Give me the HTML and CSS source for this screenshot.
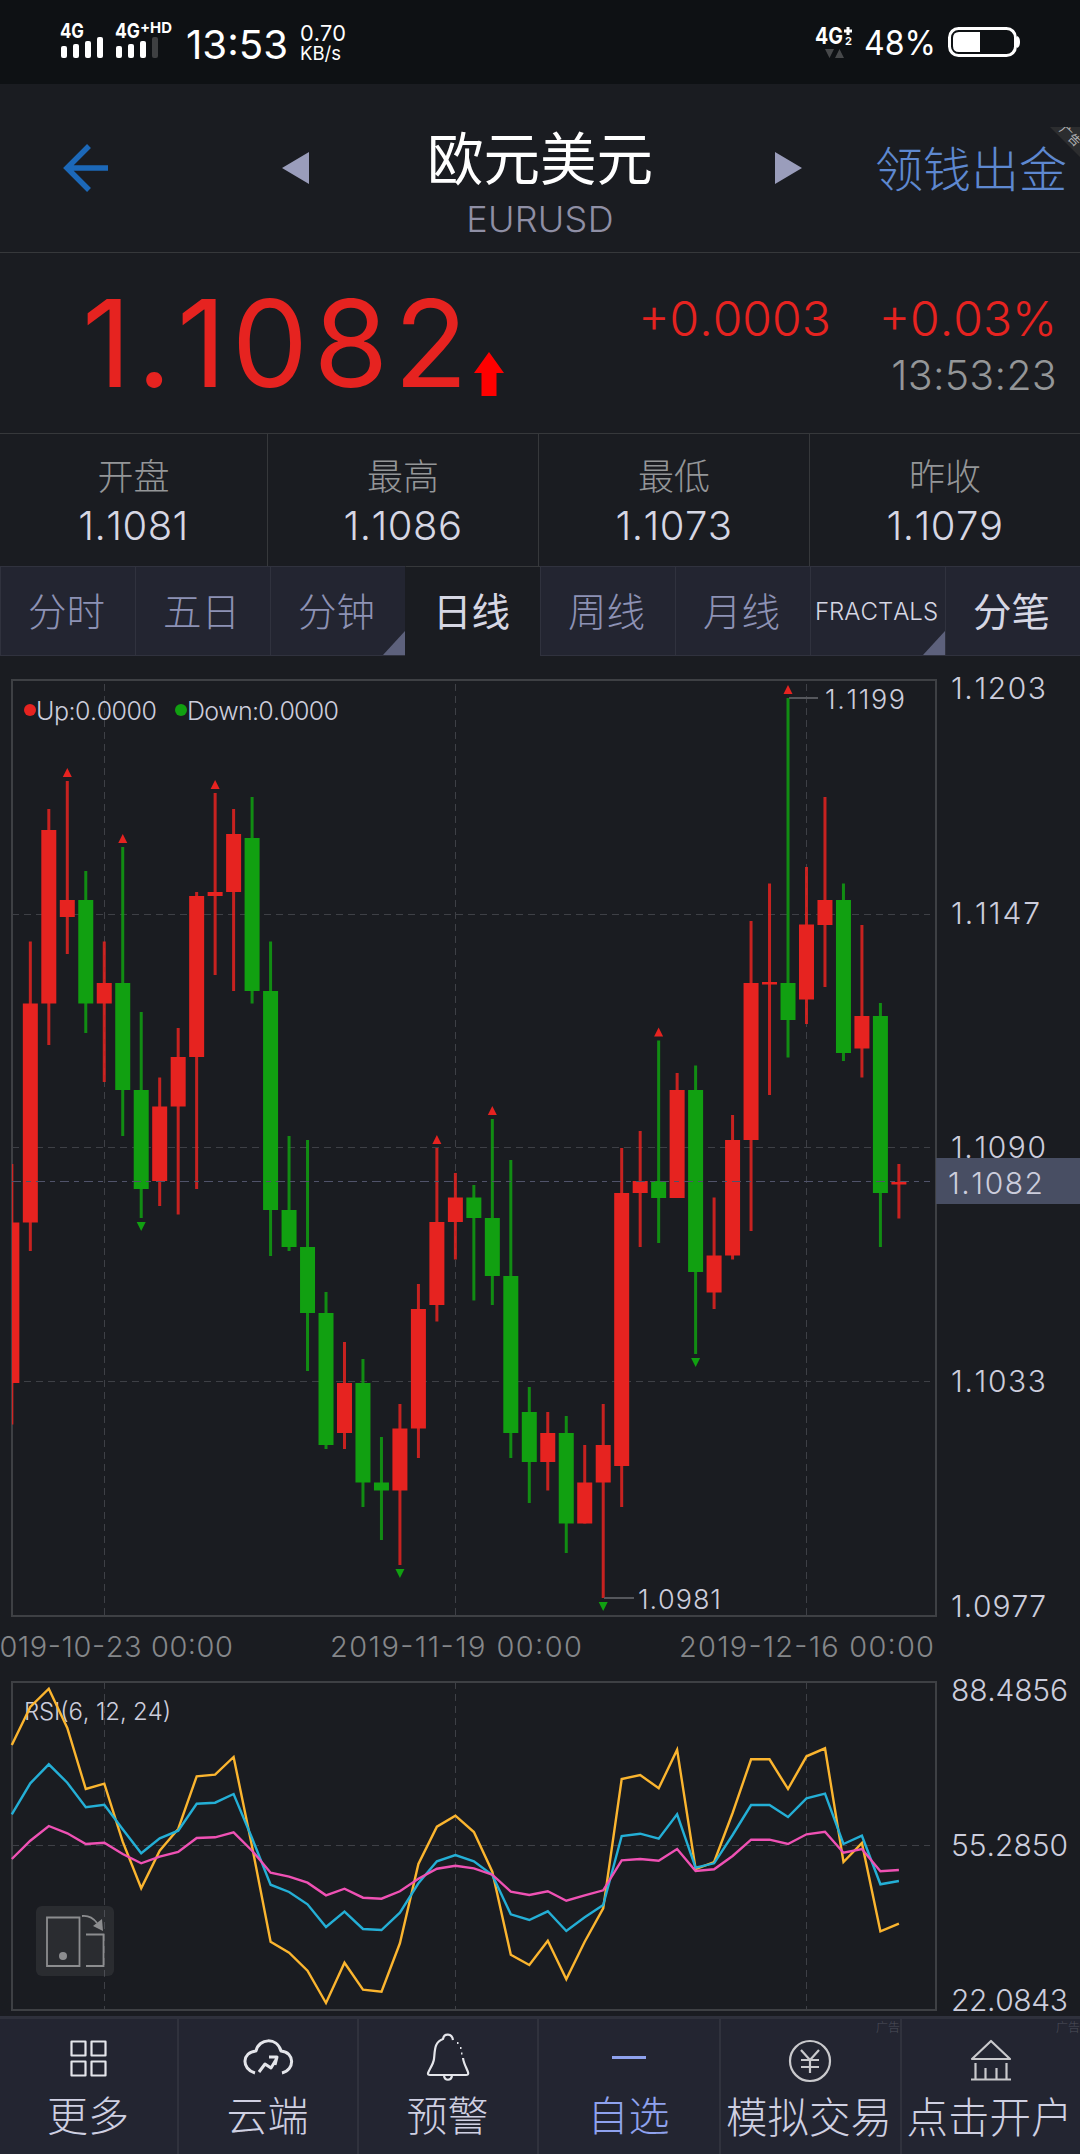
FILE: index.html
```html
<!DOCTYPE html>
<html lang="zh-CN">
  <head>
    <meta charset="UTF-8" />
    <meta name="viewport" content="width=device-width, initial-scale=1.0" />
    <title>欧元美元 EURUSD</title>
    <link rel="stylesheet" href="styles.css">
  </head>
  <body>
    <!-- 状态栏 -->
    <div class="status-bar">
      <svg width="360" height="84" viewBox="0 0 360 84" fill="#fff">
        <text class="net" x="60" y="38" font-size="20" textLength="24" lengthAdjust="spacingAndGlyphs">4G</text>
        <rect x="61" y="46" width="6" height="12" rx="2" />
        <rect x="73" y="44" width="6" height="14" rx="2" />
        <rect x="85" y="41" width="6" height="17" rx="2" />
        <rect x="97" y="37" width="6" height="21" rx="2" />
        <text class="net" x="115" y="38" font-size="20" textLength="25" lengthAdjust="spacingAndGlyphs">4G</text>
        <text class="net" x="140" y="33" font-size="15" textLength="32" lengthAdjust="spacingAndGlyphs">+HD</text>
        <rect x="116" y="46" width="6" height="12" rx="2" />
        <rect x="128" y="44" width="6" height="14" rx="2" />
        <rect x="140" y="41" width="6" height="17" rx="2" />
        <rect x="152" y="37" width="6" height="21" rx="2" fill="#3e4042" />
        <text x="186" y="59" font-size="39" textLength="102" lengthAdjust="spacingAndGlyphs">13:53</text>
        <text x="300" y="41" font-size="22" textLength="46" lengthAdjust="spacingAndGlyphs">0.70</text>
        <text x="300" y="60" font-size="19" textLength="41" lengthAdjust="spacingAndGlyphs">KB/s</text>
      </svg>
      <svg width="280" height="84" viewBox="800 0 280 84" fill="#fff">
        <text class="net" x="815" y="44" font-size="23" textLength="28" lengthAdjust="spacingAndGlyphs">4G</text>
        <path d="M844 31H852M848 27V35" stroke="#fff" stroke-width="3" />
        <text class="net" x="845" y="45" font-size="11">2</text>
        <path d="M825 49H834L829.500 58ZM835 58H844L839.500 49Z" fill="#46484a" />
        <text x="864" y="55" font-size="34" textLength="72" lengthAdjust="spacingAndGlyphs">48%</text>
        <rect x="949.500" y="28.500" width="66" height="27" rx="9" fill="none" stroke="#fff" stroke-width="3" />
        <path d="M980 32V52H959Q953 52 953 46V38Q953 32 959 32Z" />
        <path d="M1017 36Q1020 37 1020 42T1017 48Z" />
      </svg>
    </div>

    <!-- 标题栏 -->
    <header class="header">
      <svg class="back" width="46" height="50" viewBox="0 0 46 50">
        <path d="M26 3L4 25L26 47M3 25H45" fill="none" stroke="#1c68b8" stroke-width="5.500" />
      </svg>
      <svg class="arrow" width="28" height="32" viewBox="0 0 28 32"><path d="M0 16L27 0V32Z" /></svg>
      <div class="title">
        <h1>欧元美元</h1>
        <p>EURUSD</p>
      </div>
      <svg class="arrow next" width="28" height="32" viewBox="0 0 28 32"><path d="M28 16L1 0V32Z" /></svg>
      <a class="promo">领钱出金</a>
      <div class="corner"><span>广告</span></div>
    </header>

    <!-- 最新报价 -->
    <section class="quote">
      <div class="price">1.1082</div>
      <svg class="price-up" width="30" height="44" viewBox="0 0 30 44">
        <path d="M15 0L30 21H22.500V44H7.500V21H0Z" fill="#f00" />
      </svg>
      <div class="change">
        <div class="change-row"><span class="diff">+0.0003</span><span class="pct">+0.03%</span></div>
        <div class="time">13:53:23</div>
      </div>
    </section>

    <section class="stats">
      <div class="stat"><span>开盘</span><b>1.1081</b></div>
      <div class="stat"><span>最高</span><b>1.1086</b></div>
      <div class="stat"><span>最低</span><b>1.1073</b></div>
      <div class="stat"><span>昨收</span><b>1.1079</b></div>
    </section>

    <nav class="tabs">
      <a class="tab">分时</a>
      <a class="tab">五日</a>
      <a class="tab more">分钟</a>
      <a class="tab active">日线</a>
      <a class="tab">周线</a>
      <a class="tab">月线</a>
      <a class="tab more indicator">FRACTALS</a>
      <a class="tab light">分笔</a>
    </nav>

    <!-- K线图 -->
    <svg class="chart" width="1080" height="1012" viewBox="0 656 1080 1012">
      <defs>
        <clipPath id="plot"><rect x="12" y="680" width="924" height="936" /></clipPath>
      </defs>
      <g class="grid">
        <path d="M12 914.500H930M12 1147.500H930M12 1381.500H930" />
        <path d="M104.500 684V1616M455.500 684V1616M806.500 684V1616" />
      </g>
      <rect class="frame" x="12" y="680" width="924" height="936" />
      <g id="candles" clip-path="url(#plot)"></g>
      <path class="last-line" d="M12 1181.500H930" />
      <path class="leader" d="M789 698H818M604 1598H634" />
      <circle cx="30" cy="710" r="6" fill="#e62320" />
      <circle cx="181" cy="710" r="6" fill="#11a011" />
      <g class="label" font-size="25">
        <text x="36" y="720" textLength="121">Up:0.0000</text>
        <text x="187" y="720" textLength="152">Down:0.0000</text>
      </g>
      <g class="label" font-size="27">
        <text x="825" y="709" textLength="80">1.1199</text>
        <text x="638" y="1609" textLength="83">1.0981</text>
      </g>
      <g class="label" font-size="30">
        <text x="951" y="699" textLength="95">1.1203</text>
        <text x="951" y="924" textLength="89">1.1147</text>
        <text x="951" y="1158" textLength="95">1.1090</text>
        <text x="951" y="1392" textLength="95">1.1033</text>
        <text x="951" y="1617" textLength="95">1.0977</text>
        <rect x="936" y="1158" width="144" height="46" fill="#484e63" />
        <text x="948" y="1194" textLength="95">1.1082</text>
      </g>
      <g class="dates" font-size="29">
        <text x="-19" y="1657" textLength="252">2019-10-23 00:00</text>
        <text x="330" y="1657" textLength="252">2019-11-19 00:00</text>
        <text x="679" y="1657" textLength="255">2019-12-16 00:00</text>
      </g>
    </svg>

    <!-- RSI 指标 -->
    <svg class="chart" width="1080" height="348" viewBox="0 1668 1080 348">
      <g class="grid">
        <path d="M12 1845.500H930" />
        <path d="M104.500 1682V2010M455.500 1682V2010M806.500 1682V2010" />
      </g>
      <rect class="frame" x="12" y="1682" width="924" height="328" />
      <text class="label" x="24" y="1720" font-size="24" textLength="147">RSI(6, 12, 24)</text>
      <g id="rsi"></g>
      <g class="rotate">
        <rect x="36" y="1906" width="78" height="70" rx="6" fill="#fff" fill-opacity="0.07" />
        <path d="M47 1917.500H79.500V1966H47ZM86 1934.500H103.500V1966H86" />
        <path d="M82 1916Q91 1915 97 1923" />
        <path class="head" d="M93 1926L102 1919L103 1931Z" />
        <circle cx="63" cy="1956" r="4" />
      </g>
      <g class="label" font-size="30">
        <text x="951" y="1701" textLength="117">88.4856</text>
        <text x="951" y="1856" textLength="117">55.2850</text>
        <text x="951" y="2011" textLength="117">22.0843</text>
      </g>
    </svg>

    <!-- 底部导航 -->
    <nav class="bottom">
      <a class="item">
        <svg width="52" height="52" viewBox="0 0 52 52">
          <path d="M9.500 9.500H23.500V23.500H9.500ZM29.500 9.500H43.500V23.500H29.500ZM9.500 29.500H23.500V43.500H9.500ZM29.500 29.500H43.500V43.500H29.500Z" />
        </svg>
        <span>更多</span>
      </a>
      <a class="item">
        <svg width="52" height="52" viewBox="0 0 52 52">
          <path d="M13 41C-1 37 0 20 14 19C17 6 35 5 39 19C53 20 53 38 40 41" stroke-width="3" />
          <path d="M17 40L23 32L29 36L35 26M27 25H35L33 33" stroke-width="3" />
        </svg>
        <span>云端</span>
      </a>
      <a class="item">
        <svg width="52" height="52" viewBox="0 0 52 52">
          <path d="M31 8C30 1 22 1 21 7C12 10 13 19 12 27C11 35 2 43 8 43H44C50 43 42 35 41 26M22 44C23 49 29 49 30 44" />
          <path d="M35 11H36.500M38 16H39.500M39 21.500H40.500" stroke-width="2" />
        </svg>
        <span>预警</span>
      </a>
      <a class="item current">
        <svg width="52" height="52" viewBox="0 0 52 52"><path d="M9 25.500H43" stroke-width="3" /></svg>
        <span>自选</span>
      </a>
      <a class="item ad">
        <i>广告</i>
        <svg width="52" height="52" viewBox="0 0 52 52">
          <circle cx="26" cy="29" r="20" />
          <path d="M17 18L26 28L35 18M26 28V41M17 28H35M17 35H35" />
        </svg>
        <span>模拟交易</span>
      </a>
      <a class="item ad">
        <i>广告</i>
        <svg width="52" height="52" viewBox="0 0 52 52">
          <path d="M7 27L26 9L45 27ZM6 47.500H46M10.500 31V47M20.500 36V47M31.500 36V47M41.500 31V47" />
        </svg>
        <span>点击开户</span>
      </a>
    </nav>

    <script src="script.js"></script>
  </body>
</html>
```
FILE: styles.css
```css
* {
  box-sizing: border-box;
}
body {
  width: 1080px;
  height: 2154px;
  margin: 0;
  overflow: hidden;
  background-color: #1a1c21;
  color: #d6d7e4;
  font-family: Inter, "Noto Sans CJK SC", sans-serif;
  font-weight: 300;
  font-kerning: none;
}
svg {
  display: block;
}
.status-bar {
  display: flex;
  justify-content: space-between;
  height: 84px;
  background-color: #0e1114;
  font-weight: 400;
}
.net {
  font-weight: 700;
}

/* 标题栏 */
.header {
  position: relative;
  display: flex;
  align-items: flex-start;
  height: 169px;
  border-bottom: 1px solid #36383b;
}
.back {
  margin: 59px 0 0 63px;
}
.arrow {
  margin-top: 68px;
  fill: #9a9dbb;
}
.back + .arrow {
  margin-left: 173px;
}
.arrow.next {
  margin-left: 4px;
}
.title {
  width: 460px;
  text-align: center;
}
.title h1 {
  margin: 41px 0 0;
  color: #fff;
  font-size: 56.500px;
  font-weight: 400;
  line-height: 70px;
}
.title p {
  margin: 4px 0 0;
  color: #8f8fa5;
  font-size: 36px;
  letter-spacing: 0.300px;
  line-height: 40px;
}
.promo {
  margin: 56px 0 0 73px;
  color: #5e88d0;
  font-size: 48px;
  line-height: 60px;
  white-space: nowrap;
}
.corner {
  position: absolute;
  top: 43px;
  right: 0;
  width: 30px;
  height: 30px;
  overflow: hidden;
  background-color: #2c2d2f;
  clip-path: polygon(0 0, 100% 0, 100% 100%);
}
.corner span {
  position: absolute;
  top: 3px;
  left: 8px;
  color: #b4b5b7;
  font-size: 12px;
  font-weight: 400;
  line-height: 12px;
  white-space: nowrap;
  transform: rotate(45deg);
}

/* 报价 */
.quote {
  display: flex;
  align-items: flex-start;
  height: 181px;
  padding: 0 23px 0 82px;
  border-bottom: 1px solid #36383b;
  color: #e62320;
}
.price {
  width: 392px;
  margin-top: 18px;
  font-size: 121px;
  font-weight: 400;
  letter-spacing: 5.500px;
  line-height: 145px;
}
.price-up {
  margin-top: 99px;
}
.change {
  margin: 37px 0 0 auto;
  text-align: right;
}
.change-row {
  display: flex;
  gap: 48px;
  font-size: 48px;
  line-height: 58px;
}
.time {
  color: #949698;
  font-size: 41px;
  letter-spacing: 0.300px;
  line-height: 54px;
}
.stats {
  display: grid;
  grid-template-columns: 268px 271px 271px 270px;
  height: 132px;
}
.stat {
  display: flex;
  flex-direction: column;
  align-items: center;
  padding-top: 19px;
  border-right: 1px solid #36383b;
}
.stat:last-child {
  border-right: none;
}
.stat span {
  color: #949698;
  font-size: 36px;
  line-height: 48px;
}
.stat b {
  font-size: 40px;
  font-weight: 300;
  letter-spacing: 0.500px;
  line-height: 50px;
}

/* 周期 */
.tabs {
  display: grid;
  grid-template-columns: repeat(8, 1fr);
  height: 90px;
}
.tab {
  position: relative;
  padding-right: 3px;
  border: solid #30323e;
  border-width: 1px 0 1px 1px;
  background-color: #232531;
  color: #8d92b5;
  font-size: 38.500px;
  line-height: 90px;
  height: 90px;
  text-align: center;
}
.tab.active {
  border-color: #36383b #1a1c21 #1a1c21;
  background-color: #1a1c21;
  color: #d6d7e4;
  font-weight: 400;
}
.tab.light {
  color: #d6d7e4;
  font-weight: 400;
}
.tab.indicator {
  color: #d6d7e4;
  font-size: 24px;
}
.tab.more::after {
  content: "";
  position: absolute;
  right: 0;
  bottom: 0;
  border: solid transparent;
  border-width: 12px 11px;
  border-right-color: #5d617c;
  border-bottom-color: #5d617c;
}

/* 图表 */
.grid path,
.last-line {
  fill: none;
  stroke: #3e4046;
  stroke-dasharray: 7 5;
}
.last-line {
  stroke: #50536a;
  stroke-dasharray: 9 5 5 5;
}
.frame {
  fill: none;
  stroke: #3e4044;
  stroke-width: 2;
}
.leader {
  stroke: #55575c;
  stroke-width: 2;
}
.label {
  fill: #cccddc;
}
.dates {
  fill: #85878a;
}
.up {
  fill: #e62320;
}
.down {
  fill: #11a011;
}
.wick {
  opacity: 0.85;
}
.line {
  fill: none;
  stroke-width: 2.400;
}
.rsi6 {
  stroke: #fbb52f;
}
.rsi12 {
  stroke: #24afd6;
}
.rsi24 {
  stroke: #ef51b4;
}
.rotate path {
  fill: none;
  stroke: #8c8d8f;
  stroke-width: 1.800;
}
.rotate .head,
.rotate circle {
  fill: #8c8d8f;
  stroke: none;
}

/* 底部导航 */
.bottom {
  display: grid;
  grid-template-columns: 179px 180px 180px 182px 181px 178px;
  height: 138px;
  border-top: 3px solid #2f313c;
  background-color: #232531;
}
.item {
  position: relative;
  display: flex;
  flex-direction: column;
  align-items: center;
  padding: 13px 1px 0 0;
  border-right: 2px solid #30323d;
  color: #cfd0e2;
  font-size: 41px;
  line-height: 64px;
  white-space: nowrap;
}
.item:last-child {
  border-right: none;
}
.item svg {
  fill: none;
  stroke: #e4e5ea;
  stroke-width: 2.200;
  stroke-linejoin: round;
}
.item.current {
  color: #8fa2ee;
}
.item.current svg {
  stroke: #8fa2ee;
}
.item.ad svg {
  stroke: #c9c9cc;
}
.item.ad span {
  padding: 2px 2px 0 0;
  font-size: 41.500px;
}
.item i {
  position: absolute;
  top: 1px;
  right: 0;
  color: #4d4f5b;
  font-size: 12px;
  font-style: normal;
  line-height: 16px;
}
```
FILE: script.js
```js
const SVG = "http://www.w3.org/2000/svg";
const START = 11.85;
const STEP = 18.48;

// [high, body top, body bottom, low, direction, fractal]
const candles = [
  [1164, 1222.5, 1383, 1424.5, "up"],
  [941.5, 1003.5, 1222.5, 1251, "up"],
  [809, 830, 1003.5, 1045, "up"],
  [781, 900, 917, 954, "up", "top"],
  [871, 900, 1003.5, 1033, "down"],
  [941.5, 983, 1003.5, 1082, "up"],
  [847, 983, 1090, 1136, "down", "top"],
  [1012, 1090, 1189, 1218, "down", "bottom"],
  [1077.5, 1106.5, 1181, 1206, "up"],
  [1028, 1057, 1106.5, 1214.5, "up"],
  [892, 896, 1057, 1189, "up"],
  [793, 892, 896, 975, "up", "top"],
  [809, 834, 892, 991, "up"],
  [797, 838, 991, 1003.5, "down"],
  [941.5, 991, 1210, 1256, "down"],
  [1136, 1210, 1247, 1251, "down"],
  [1140, 1247, 1313, 1371, "down"],
  [1292, 1313, 1445, 1449, "down"],
  [1342, 1383, 1433, 1449, "up"],
  [1359, 1383, 1482.5, 1507, "down"],
  [1437, 1482.5, 1490.5, 1540, "down"],
  [1404, 1428.5, 1490.5, 1565, "up", "bottom"],
  [1284, 1309, 1428.5, 1458, "up"],
  [1148, 1222, 1305, 1321.5, "up", "top"],
  [1173, 1197.5, 1222, 1259.5, "up"],
  [1185, 1197.5, 1218, 1300.5, "down"],
  [1119, 1218, 1276, 1305, "down", "top"],
  [1160, 1276, 1433, 1458, "down"],
  [1387, 1412, 1462, 1503, "down"],
  [1412, 1433, 1462, 1490.5, "up"],
  [1416, 1433, 1523.5, 1553, "down"],
  [1445, 1482.5, 1523.5, 1523.5, "up"],
  [1404, 1445, 1482.5, 1598, "up", "bottom"],
  [1148, 1193, 1466, 1507, "up"],
  [1131, 1181, 1193, 1247, "up"],
  [1040.5, 1181, 1198, 1243, "down", "top"],
  [1073, 1090, 1198, 1198, "up"],
  [1065.5, 1090, 1272, 1354, "down", "bottom"],
  [1197.5, 1255.5, 1292.5, 1309, "up"],
  [1115, 1140, 1255.5, 1259.5, "up"],
  [921, 983, 1140, 1231, "up"],
  [883.5, 982, 984.5, 1095, "up"],
  [698, 983, 1020, 1057.5, "down", "top"],
  [867, 924.5, 999.5, 1024, "up"],
  [797, 900, 925, 987, "up"],
  [883.5, 900, 1053, 1061, "down"],
  [925, 1016, 1048.5, 1077.5, "up"],
  [1003, 1016, 1193, 1247, "down"],
  [1164, 1182, 1184.5, 1218.5, "up"],
];

const rsi = {
  rsi6: [
    1745, 1707, 1688.7, 1728, 1789, 1783.7, 1841.7, 1888.3, 1850.7, 1829,
    1776.3, 1774.7, 1757, 1846.7, 1941.7, 1952.7, 1970.7, 2003, 1962.7, 1989.7,
    1991.7, 1943.3, 1864, 1826.7, 1815.7, 1832, 1871.7, 1954.7, 1965, 1940.7,
    1979.3, 1941.7, 1908.3, 1779, 1775, 1788.3, 1749.7, 1869, 1862, 1813,
    1759.3, 1759.3, 1789, 1756.3, 1748.3, 1862, 1843, 1931.3, 1923.7,
  ],
  rsi12: [
    1814.3, 1783.3, 1764.3, 1782.7, 1807.3, 1804.7, 1829.3, 1853.3, 1838.3, 1830.7,
    1803.7, 1802.7, 1794, 1838.3, 1884.7, 1892, 1904.3, 1927, 1911.7, 1929,
    1930, 1912.7, 1883.3, 1861.3, 1855, 1861.3, 1875, 1914.3, 1920, 1911.3,
    1931, 1917.3, 1905, 1836, 1833.7, 1838.7, 1814.3, 1867.7, 1863.3, 1835,
    1805, 1805, 1817, 1798.3, 1793.7, 1844, 1835.7, 1884.3, 1881,
  ],
  rsi24: [
    1859, 1840.7, 1826, 1833.3, 1844, 1842.7, 1854, 1863.3, 1856.7, 1852,
    1838, 1837.3, 1832.3, 1850.7, 1872.7, 1876.7, 1882.7, 1895.3, 1888.7, 1897.7,
    1898.7, 1891.3, 1878.7, 1868.7, 1865.7, 1868.3, 1874.7, 1891.7, 1895, 1891.3,
    1900.7, 1895.3, 1890.3, 1860.3, 1859, 1860.7, 1849, 1871, 1869.3, 1856,
    1839.7, 1839.7, 1844, 1834.3, 1831.7, 1852.7, 1849, 1871.3, 1870,
  ],
};

function add(parent, tag, attrs) {
  const el = document.createElementNS(SVG, tag);
  for (const key in attrs) el.setAttribute(key, attrs[key]);
  parent.appendChild(el);
}

const plot = document.getElementById("candles");
candles.forEach(([high, top, bottom, low, dir, fractal], i) => {
  const x = START + i * STEP;
  add(plot, "rect", { class: "wick " + dir, x: x - 1.5, y: high, width: 3, height: low - high });
  add(plot, "rect", { class: dir, x: x - 7.5, y: top, width: 15, height: bottom - top });
  if (fractal === "top") {
    add(plot, "path", { class: "up", d: `M${x - 4.5} ${high - 4}h9l-4.500 -9z` });
  } else if (fractal === "bottom") {
    add(plot, "path", { class: "down", d: `M${x - 4.5} ${low + 4}h9l-4.500 9z` });
  }
});

for (const name in rsi) {
  const points = rsi[name].map((y, i) => `${(START + i * STEP).toFixed(1)},${y}`).join(" ");
  add(document.getElementById("rsi"), "polyline", { class: "line " + name, points });
}
```
